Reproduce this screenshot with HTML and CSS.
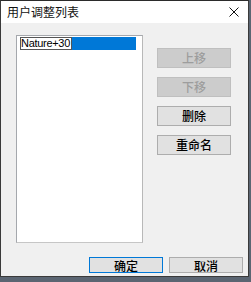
FILE: index.html
```html
<!DOCTYPE html>
<html>
<head>
<meta charset="utf-8">
<link rel="stylesheet" href="styles.css">
</head>
<body>
<div class="window">
  <div class="titlebar">
    <span class="title">用户调整列表</span>
    <svg class="close" width="10" height="10" viewBox="0 0 10 10"><path d="M0.5 0.5L9.5 9.5M9.5 0.5L0.5 9.5" stroke="#111" stroke-width="1" fill="none"/></svg>
  </div>
  <div class="client">
    <div class="main">
      <div class="listbox">
        <div class="item">
          <span class="edit">Nature+30</span>
          <span class="sel"></span>
        </div>
      </div>
      <div class="side">
        <button class="btn disabled">上移</button>
        <button class="btn disabled">下移</button>
        <button class="btn">删除</button>
        <button class="btn">重命名</button>
      </div>
    </div>
    <div class="footer">
      <button class="btn fbtn default">确定</button>
      <button class="btn fbtn">取消</button>
    </div>
  </div>
</div>
</body>
</html>
```
FILE: styles.css
```css
html, body {
  margin: 0;
  padding: 0;
}
body {
  width: 251px;
  height: 282px;
  background: #5b6572;
  font-family: "Noto Sans CJK SC", "Liberation Sans", sans-serif;
  overflow: hidden;
}
.window {
  width: 247px;
  height: 275px;
  border: 1px solid #3a3a3a;
  border-top-color: #2b2b2b;
  background: #f0f0f0;
  display: flex;
  flex-direction: column;
}
.titlebar {
  height: 22px;
  background: #ffffff;
  display: flex;
  align-items: center;
  justify-content: space-between;
  padding: 0 8px 0 6px;
}
.title {
  font-size: 12px;
  color: #111;
  line-height: 22px;
}
.close {
  display: block;
  margin-right: 1px;
}
.client {
  flex: 1;
  padding: 12px 5px 0 15px;
  display: flex;
  flex-direction: column;
}
.main {
  display: flex;
  align-items: flex-start;
}
.listbox {
  width: 122px;
  height: 205px;
  background: #fff;
  border: 1px solid #a5a8ad;
  border-bottom-color: #c6c6c6;
  border-right-color: #b8b8b8;
  padding: 1px 0 0 3px;
}
.item {
  display: flex;
  height: 13px;
}
.edit {
  width: 50px;
  height: 11px;
  border: 1px solid #555;
  background: #fff;
  font-family: "Liberation Sans", sans-serif;
  font-size: 11px;
  line-height: 11px;
  letter-spacing: -0.3px;
  color: #000;
  white-space: nowrap;
}
.sel {
  width: 64px;
  background: #0078d7;
}
.side {
  margin-left: 14px;
  margin-top: 13px;
  display: flex;
  flex-direction: column;
  gap: 9px;
}
.btn {
  width: 74px;
  height: 20px;
  padding: 0;
  background: #e1e1e1;
  border: 1px solid #adadad;
  font-family: "Noto Sans CJK SC", sans-serif;
  font-size: 12px;
  font-weight: 500;
  color: #000;
  line-height: 16px;
  border-radius: 0;
}
.btn.disabled {
  background: #cccccc;
  border-color: #bfbfbf;
  color: #9d9d9d;
}
.footer {
  margin-top: 14px;
  display: flex;
  justify-content: flex-end;
  gap: 6px;
}
.fbtn {
  height: 16px;
  line-height: 13px;
}
.btn.default {
  border-color: #0078d7;
}
```
